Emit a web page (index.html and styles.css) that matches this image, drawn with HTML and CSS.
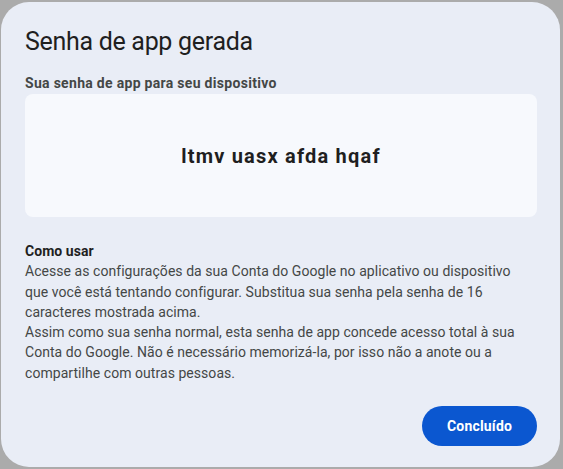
FILE: index.html
```html
<!DOCTYPE html>
<html lang="pt-BR">
<head>
<meta charset="utf-8">
<link rel="stylesheet" href="styles.css">
</head>
<body>
<div class="dialog">
  <h1 class="title">Senha de app gerada</h1>
  <div class="label">Sua senha de app para seu dispositivo</div>
  <div class="pwbox"><span class="pw">ltmv uasx afda hqaf</span></div>
  <div class="howto">
    <div class="howto-title">Como usar</div>
    <p>Acesse as configurações da sua Conta do Google no aplicativo ou dispositivo que você está tentando configurar. Substitua sua senha pela senha de 16 caracteres mostrada acima.</p>
    <p>Assim como sua senha normal, esta senha de app concede acesso total à sua Conta do Google. Não é necessário memorizá-la, por isso não a anote ou a compartilhe com outras pessoas.</p>
  </div>
  <div class="actions"><button class="done">Concluído</button></div>
</div>
</body>
</html>
```
FILE: styles.css
```css
html, body { margin: 0; padding: 0; }
body {
  background: #ababab;
  width: 563px;
  height: 469px;
  overflow: hidden;
  font-family: Roboto, "Liberation Sans", sans-serif;
}
.dialog {
  box-sizing: border-box;
  margin: 2px 0 0 1px;
  width: 559px;
  height: 465px;
  background: #e9edf6;
  border-radius: 28px;
  padding: 22px 23px 0 24px;
  display: flex;
  flex-direction: column;
}
.title {
  margin: 0;
  font-family: Roboto, "Open Sans", sans-serif;
  font-weight: 400;
  font-size: 25px;
  line-height: 36px;
  letter-spacing: -0.3px;
  color: #1f1f1f;
}
.label {
  margin-top: 13px;
  font-size: 14px;
  font-weight: 700;
  line-height: 20px;
  letter-spacing: 0.3px;
  color: #444746;
}
.pwbox {
  margin-top: 1px;
  height: 123px;
  background: #f7f9fd;
  border-radius: 8px;
  display: flex;
  align-items: center;
  justify-content: center;
}
.pw {
  font-size: 20px;
  font-weight: 700;
  color: #1f1f1f;
  letter-spacing: 1.2px;
}
.howto {
  margin-top: 24px;
  width: 496px;
  font-size: 14px;
  line-height: 20.3px;
  letter-spacing: 0.05px;
  color: #444746;
}
.howto-title { font-weight: 700; color: #1f1f1f; }
.howto p { margin: 0; }
.actions {
  margin-top: auto;
  margin-bottom: 21px;
  display: flex;
  justify-content: flex-end;
}
.done {
  width: 115px;
  height: 40px;
  border: none;
  border-radius: 20px;
  background: #0b57d0;
  color: #fff;
  font-family: Roboto, sans-serif;
  font-size: 14px;
  font-weight: 700;
  letter-spacing: 0.2px;
}
```
